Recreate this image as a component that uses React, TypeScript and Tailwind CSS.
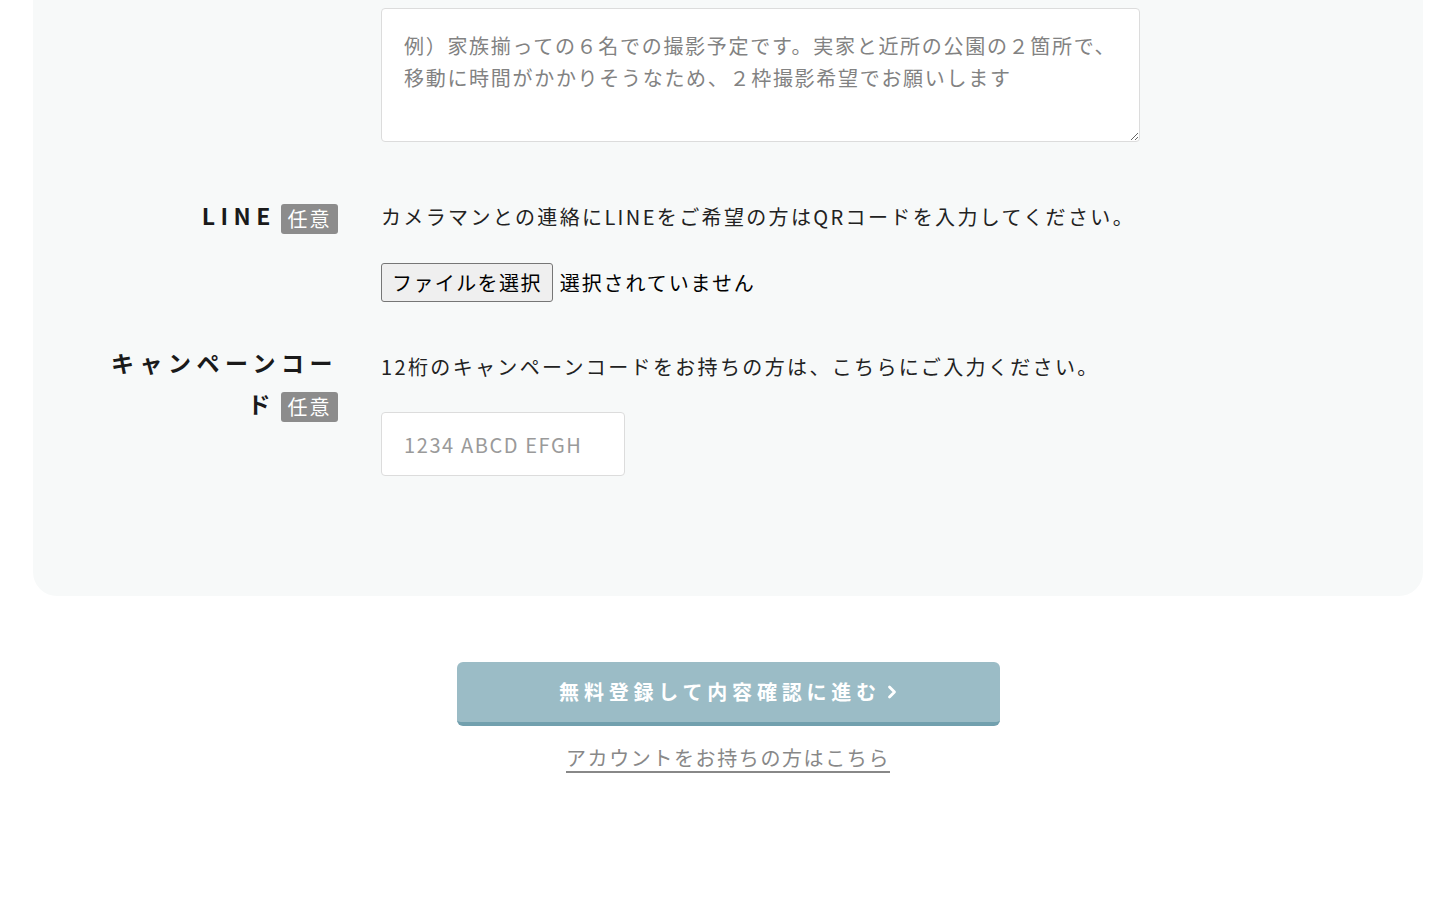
import React from "react";

function Badge() {
  return (
    <span className="ml-[5px] inline-block h-[30px] w-[57px] rounded-[3px] bg-[#8c8c8c] text-center align-middle text-[20px] font-normal leading-[30px] tracking-[0.1em] text-white">
      任意
    </span>
  );
}

export default function App() {
  return (
    <div className="min-h-screen bg-white font-['Noto_Sans_CJK_JP','Noto_Sans',sans-serif] text-[#222]">
      <div className="mx-[33px] rounded-b-[24px] bg-[#f7f9f9] pt-2 pb-[120px]">
        {/* textarea row (label above viewport) */}
        <div className="flex">
          <div className="w-[305px] shrink-0" />
          <div className="ml-[43px]">
            <textarea
              className="block h-[134px] w-[759px] rounded-[4px] border border-[#dcdcdc] bg-white pt-[21px] pr-[6px] pl-[22px] font-['Noto_Sans_CJK_JP',sans-serif] text-[20px] leading-[32px] tracking-[0.085em] text-[#333] placeholder:text-[#828282] outline-none"
              placeholder={
                "例）家族揃っての６名での撮影予定です。実家と近所の公園の２箇所で、\n移動に時間がかかりそうなため、２枠撮影希望でお願いします"
              }
            />
          </div>
        </div>

        {/* LINE row */}
        <div className="mt-[54px] flex">
          <div className="-mt-[1px] w-[305px] shrink-0 text-right text-[23px] font-bold leading-[41px] tracking-[0.24em] text-[#1a1a1a]">
            LINE
            <Badge />
          </div>
          <div className="ml-[43px]">
            <p className="mt-[5px] text-[20px] leading-[32px] tracking-[0.118em]">
              カメラマンとの連絡にLINEをご希望の方はQRコードを入力してください。
            </p>
            <div className="mt-[30px] flex items-center">
              <span className="inline-block h-[39px] rounded-[3px] border border-[#767676] bg-[#efefef] px-[10px] text-[20px] leading-[37px] tracking-[0.07em] text-black">
                ファイルを選択
              </span>
              <span className="ml-[7px] text-[20px] leading-[32px] tracking-[0.095em] text-black">
                選択されていません
              </span>
            </div>
          </div>
        </div>

        {/* Campaign code row */}
        <div className="mt-[44px] flex">
          <div className="-mt-[4px] w-[305px] shrink-0 text-right text-[23px] font-bold leading-[41px] tracking-[0.24em] text-[#1a1a1a]">
            キャンペーンコー
            <br />
            ド<Badge />
          </div>
          <div className="ml-[43px]">
            <p className="mt-[5px] text-[20px] leading-[32px] tracking-[0.118em]">
              12桁のキャンペーンコードをお持ちの方は、こちらにご入力ください。
            </p>
            <input
              type="text"
              className="mt-[29px] block h-[64px] w-[244px] rounded-[4px] border border-[#dcdcdc] bg-white px-[22px] font-['Noto_Sans_CJK_JP',sans-serif] text-[20px] tracking-[0.08em] text-[#333] placeholder:text-[#9a9a9a] outline-none"
              placeholder="1234 ABCD EFGH"
            />
          </div>
        </div>
      </div>

      {/* Submit */}
      <div className="mt-[66px] flex flex-col items-center">
        <button className="flex h-[64px] w-[543px] items-center justify-center rounded-[6px] border-b-4 border-[#72a0ae] bg-[#9bbcc6] text-[20px] font-bold tracking-[0.24em] text-white">
          <span>無料登録して内容確認に進む</span>
          <svg width="10" height="14" viewBox="0 0 10 14" className="ml-[6px]">
            <path d="M2.5 2 L7.5 7 L2.5 12" fill="none" stroke="white" strokeWidth="2.8" strokeLinecap="round" strokeLinejoin="round" />
          </svg>
        </button>
        <a className="mt-[16px] text-[20px] leading-[32px] tracking-[0.08em] text-[#888] underline underline-offset-[5px] decoration-[1.5px]">
          アカウントをお持ちの方はこちら
        </a>
      </div>
    </div>
  );
}
